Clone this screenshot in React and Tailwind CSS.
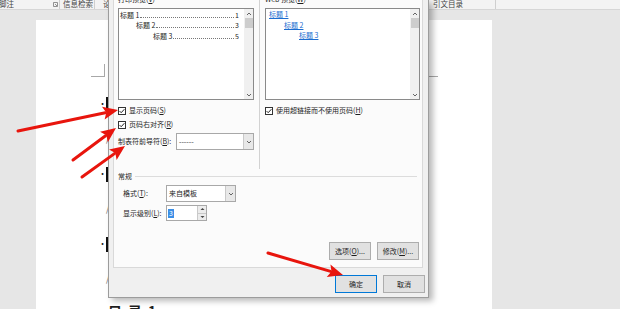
import React from "react";

function Check() {
  return (
    <svg width="8" height="8" viewBox="0 0 8 8" className="shrink-0">
      <rect x="0.5" y="0.5" width="7" height="7" fill="#fff" stroke="#333" />
      <path d="M1.6 4.1 L3.2 5.7 L6.4 2.2" fill="none" stroke="#222" strokeWidth="1" />
    </svg>
  );
}

function Chev({ up = false, size = 6 }) {
  return (
    <svg width={size} height={size} viewBox="0 0 6 6">
      <path d={up ? "M1 4 L3 2 L5 4" : "M1 2 L3 4 L5 2"} fill="none" stroke="#555" strokeWidth="0.9" />
    </svg>
  );
}

function ListBox({ children }) {
  return (
    <div className="flex h-[92px] border border-[#8a8a8a] bg-white">
      <div className="flex-1 pt-[1px] pl-[1px] pr-[5px]">{children}</div>
      <div className="flex w-[9px] flex-col items-center bg-[#f0f0f0]">
        <div className="flex h-[9px] items-center"><Chev up /></div>
        <div className="h-[10px] w-[8px] bg-[#cdcdcd]" />
        <div className="flex-1" />
        <div className="flex h-[9px] items-center"><Chev /></div>
      </div>
    </div>
  );
}

function Entry({ indent, label, page }) {
  return (
    <div className={`flex h-[10.5px] items-center whitespace-nowrap ${indent}`}>
      <span>{label}</span>
      <span className="mx-[1px] mt-[4px] flex-1 border-b border-dotted border-[#777]" />
      <span>{page}</span>
    </div>
  );
}

function Drop({ w, text }) {
  return (
    <div className={`flex h-[17px] shrink-0 border border-[#a8a8a8] bg-white ${w}`}>
      <div className="flex flex-1 items-center whitespace-nowrap pl-[2px]">{text}</div>
      <div className="flex w-[10px] items-center justify-center border-l border-[#c9c9c9] bg-[#e8e8e8]">
        <Chev />
      </div>
    </div>
  );
}

function Btn({ children, primary }) {
  return (
    <div
      className={`flex h-[18px] w-[42px] items-center justify-center whitespace-nowrap border bg-[#e1e1e1] ${
        primary ? "border-[#0078d7]" : "border-[#adadad]"
      }`}
    >
      {children}
    </div>
  );
}

function Arrow({ x1, y1, x2, y2 }) {
  const a = Math.atan2(y2 - y1, x2 - x1);
  const len = 15;
  const hw = 6.5;
  const bx = x2 - Math.cos(a) * len;
  const by = y2 - Math.sin(a) * len;
  const px = -Math.sin(a) * hw;
  const py = Math.cos(a) * hw;
  return (
    <g>
      <line x1={x1} y1={y1} x2={bx + Math.cos(a) * 2} y2={by + Math.sin(a) * 2} stroke="#e8150d" strokeWidth="3" strokeLinecap="round" />
      <polygon points={`${x2},${y2} ${bx + px},${by + py} ${bx + Math.cos(a) * 3},${by + Math.sin(a) * 3} ${bx - px},${by - py}`} fill="#e8150d" />
    </g>
  );
}

export default function App() {
  return (
    <div className="relative h-[309px] w-[620px] overflow-hidden bg-[#e6e6e6] font-['Noto_Sans_CJK_SC',sans-serif] text-[#1e1e1e]">
      {/* ribbon strip */}
      <div className="flex h-[10px] items-start whitespace-nowrap border-b border-[#d6d6d6] bg-[#f3f3f3] text-[7.5px] leading-[8px] text-[#444]">
        <span className="ml-[-1px] w-[54px]">脚注</span>
        <svg width="5" height="5" viewBox="0 0 5 5" className="mt-[2px]">
          <path d="M0.5 0.5 H4.5 V4.5 H0.5 Z M2 2 L4 4" fill="none" stroke="#777" strokeWidth="0.8" />
        </svg>
        <span className="ml-[1px] h-[9px] w-px bg-[#cfcfcf]" />
        <span className="ml-[3px] w-[31px]">信息检索</span>
        <span className="h-[9px] w-px bg-[#cfcfcf]" />
        <span className="ml-[8px] w-[330px]">论</span>
        <span className="w-[62px]">引文目录</span>
        <span className="h-[9px] w-px bg-[#cfcfcf]" />
      </div>

      {/* document area */}
      <div className="mt-[10px] flex">
        <div className="w-[36px] shrink-0" />
        <div className="h-[300px] w-[456px] shrink-0 bg-white">
          <div className="mt-[44px] flex">
            <div className="ml-[55px] h-[13px] w-[14px] border-b border-r border-[#a8a8a8]" />
            <div className="ml-[322px] h-[13px] w-[11px] border-b border-l border-[#a8a8a8]" />
          </div>
          <div className="pl-[62px] text-[8px]">
            {[0, 1, 2].map((i) => (
              <div key={i}>
                <div className="mt-[19px] flex h-[16px] items-center">
                  <span className="w-[8px] text-[9px]">•</span>
                  <span className="h-[15px] w-[2px] bg-[#111]" />
                </div>
                <div className="mt-[19px] flex h-[16px] items-center pl-[8px] text-[9px] text-[#666]">/</div>
              </div>
            ))}
            <div className="mt-[16px] whitespace-nowrap pl-[10px] text-[14px] font-bold leading-[16px] tracking-[6px]">目录1</div>
          </div>
        </div>
      </div>

      {/* dialog */}
      <div className="absolute left-[108px] top-0 flex h-[298px] w-[321px] flex-col border-x border-b border-[#9c9c9c] bg-[#f0f0f0] text-[7px] leading-[9px] shadow-[4px_3px_6px_rgba(0,0,0,0.28)]">
        <div className="ml-[4px] h-[268px] w-[310px] border-x border-b border-[#d9d9d9] bg-[#fbfbfb] pl-[4px] pr-[2px]">
          <div className="mt-[-5px] flex">
            <div className="w-[136px]">
              <div className="whitespace-nowrap">打印预览(<u>V</u>)</div>
              <div className="mt-[4px]">
                <ListBox>
                  <Entry indent="ml-0" label="标题 1" page="1" />
                  <Entry indent="ml-[16px]" label="标题 2" page="3" />
                  <Entry indent="ml-[33px]" label="标题 3" page="5" />
                </ListBox>
              </div>
              <div className="mt-[6px] flex h-[9px] items-center gap-[3px] whitespace-nowrap">
                <Check />
                <span>显示页码(<u>S</u>)</span>
              </div>
              <div className="mt-[5px] flex h-[9px] items-center gap-[3px] whitespace-nowrap">
                <Check />
                <span>页码右对齐(<u>R</u>)</span>
              </div>
              <div className="mt-[4px] flex items-center">
                <span className="w-[58px] shrink-0 whitespace-nowrap">制表符前导符(<u>B</u>):</span>
                <Drop w="w-[78px]" text="------" />
              </div>
            </div>
            <div className="ml-[5px] h-[174px] w-px bg-[#d2d2d2]" />
            <div className="ml-[5px] w-[155px]">
              <div className="whitespace-nowrap">Web 预览(<u>W</u>)</div>
              <div className="mt-[4px]">
                <ListBox>
                  <div className="whitespace-nowrap pl-[2px] text-[#1c6dd0]">
                    <div className="h-[10.5px] underline">标题 1</div>
                    <div className="ml-[15px] h-[10.5px] underline">标题 2</div>
                    <div className="ml-[30px] h-[10.5px] underline">标题 3</div>
                  </div>
                </ListBox>
              </div>
              <div className="mt-[6px] flex h-[9px] items-center gap-[3px] whitespace-nowrap">
                <Check />
                <span>使用超链接而不使用页码(<u>H</u>)</span>
              </div>
            </div>
          </div>

          <div className="mt-[3px] flex h-[9px] items-center">
            <span>常规</span>
            <span className="ml-[3px] mr-[3px] h-px flex-1 bg-[#dcdcdc]" />
          </div>
          <div className="mt-[4px] flex items-center pl-[5px]">
            <span className="w-[43px] shrink-0 whitespace-nowrap">格式(<u>T</u>):</span>
            <Drop w="w-[70px]" text="来自模板" />
          </div>
          <div className="mt-[3px] flex items-center pl-[5px]">
            <span className="w-[43px] shrink-0 whitespace-nowrap">显示级别(<u>L</u>):</span>
            <div className="flex h-[16px] w-[41px] shrink-0 border border-[#a8a8a8] bg-white">
              <div className="flex flex-1 items-center pl-[1px]">
                <span className="bg-[#3b8ee6] px-[1px] text-white">3</span>
              </div>
              <div className="flex w-[9px] flex-col border-l border-[#c9c9c9] bg-[#ececec]">
                <div className="flex flex-1 items-center justify-center border-b border-[#c9c9c9]">
                  <svg width="5" height="4" viewBox="0 0 5 4"><path d="M0.5 3 L2.5 1 L4.5 3 Z" fill="#444" /></svg>
                </div>
                <div className="flex flex-1 items-center justify-center">
                  <svg width="5" height="4" viewBox="0 0 5 4"><path d="M0.5 1 L2.5 3 L4.5 1 Z" fill="#444" /></svg>
                </div>
              </div>
            </div>
          </div>
          <div className="mt-[21px] flex justify-end gap-[6px] pr-[1px]">
            <Btn>选项(<u>O</u>)...</Btn>
            <Btn>修改(<u>M</u>)...</Btn>
          </div>
        </div>
        <div className="mt-[7px] flex justify-end gap-[6px] pr-[3px]">
          <Btn primary>确定</Btn>
          <Btn>取消</Btn>
        </div>
      </div>

      {/* annotation arrows */}
      <svg className="pointer-events-none absolute left-0 top-0" width="620" height="309">
        <Arrow x1={18} y1={131} x2={118} y2={110} />
        <Arrow x1={73} y1={160} x2={116} y2={128} />
        <Arrow x1={82} y1={177} x2={125} y2={146} />
        <Arrow x1={268} y1={253} x2={343} y2={275} />
      </svg>
    </div>
  );
}
